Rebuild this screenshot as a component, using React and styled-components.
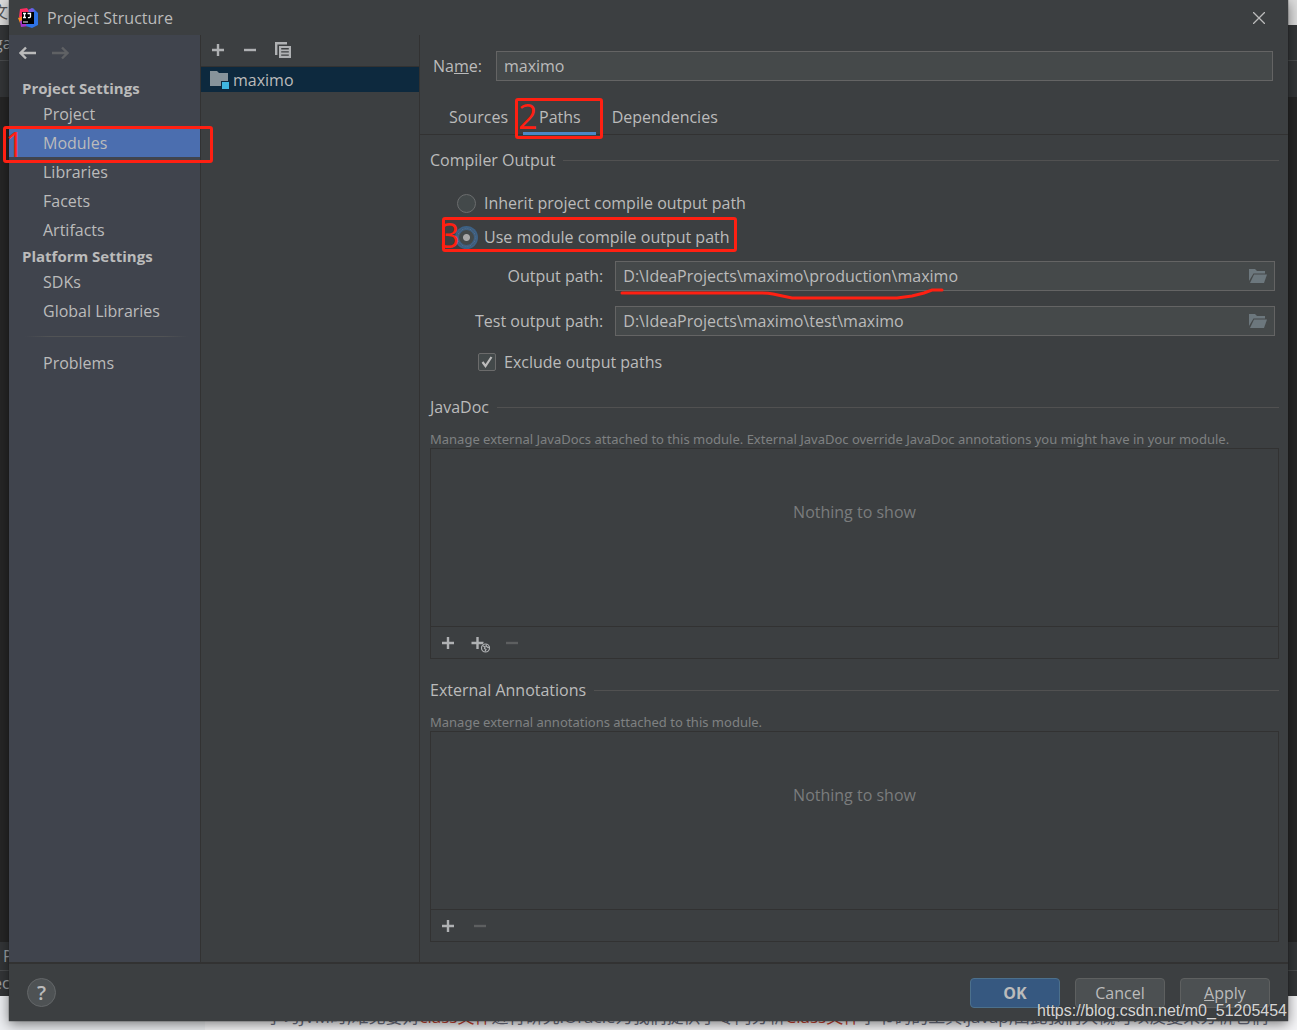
import React, { useState } from "react";
import styled, { createGlobalStyle } from "styled-components";

const GlobalStyle = createGlobalStyle`
    *{
        box-sizing: border-box;
    }
    body{
        margin: 0;
        background: #fff;
        color: #bbb;
        font-family: "Open Sans", "Noto Sans CJK SC", sans-serif;
        font-size: 16px;
        line-height: 24px;
    }
    button, input{
        font: inherit;
        color: inherit;
    }
    button{
        background: none;
        border: none;
        padding: 0;
    }
    h1, h2, p{
        margin: 0;
        font-size: 16px;
        font-weight: 400;
    }
`;

const Desktop = styled.div`
    display: grid;
    grid-template-columns: minmax(0, 1fr);
    min-height: 100vh;
    position: relative;
    overflow: hidden;
`;

const Backdrop = styled.div`
    grid-area: 1 / 1;
    display: flex;
    flex-direction: column;
    min-width: 0;
`;

const Strip = styled.div`
    height: ${(p) => p.$height}px;
    flex: ${(p) => (p.$grow ? "1" : "none")};
    background: ${(p) => p.$bg};
    color: ${(p) => p.$color || "#a0a4a8"};
    border-bottom: 1px solid ${(p) => p.$line || "transparent"};
    line-height: ${(p) => p.$height}px;
    text-indent: ${(p) => p.$indent || 0}px;
    overflow: hidden;
    white-space: nowrap;
`;

const Article = styled.div`
    display: flex;
    flex: none;
    height: 34px;
    background: linear-gradient(to right, #eceef1 205px, #f5f5f7 205px);
`;

const ArticleText = styled.p`
    padding: 9px 0 0 266px;
    height: 34px;
    overflow: hidden;
    white-space: nowrap;
    color: #6c6f80;
    line-height: 24px;
    && {
        font-size: 17px;
    }
    em{
        font-style: normal;
        color: #c7402f;
    }
`;

const Dialog = styled.main`
    grid-area: 1 / 1;
    display: flex;
    flex-direction: column;
    min-width: 0;
    margin: 0 9px 9px;
    background: #3c3f41;
    box-shadow: 0 3px 12px rgba(0, 0, 0, 0.5), 0 0 1px #222;
    z-index: 1;
`;

const TitleBar = styled.header`
    display: flex;
    align-items: center;
    gap: 9px;
    height: 35px;
    padding: 0 21px 0 9px;
    h1{
        flex: 1;
    }
`;

const Body = styled.div`
    display: flex;
    flex: 1;
`;

const Sidebar = styled.nav`
    flex: 0 0 192px;
    padding-top: 6px;
    background: #40444d;
    border-right: 1px solid #323232;
`;

const History = styled.div`
    display: flex;
    gap: 14px;
    height: 35px;
    padding: 3px 10px 0;
`;

const IconButton = styled.button`
    display: flex;
    align-items: center;
    justify-content: center;
    flex: none;
    width: ${(p) => p.$size || 16}px;
    height: ${(p) => p.$size || 16}px;
`;

const NavHeading = styled.h2`
    && {
        font-size: 15px;
        font-weight: 700;
    }
    height: 24px;
    padding-left: 13px;
`;

const NavList = styled.div`
    display: flex;
    flex-direction: column;
    gap: 1px;
`;

const NavItem = styled.a`
    position: relative;
    height: 28px;
    padding-left: 34px;
    line-height: 28px;
    color: inherit;
    text-decoration: none;
    background: ${(p) => (p.$active ? "#4b6eaf" : "none")};
`;

const NavDivider = styled.hr`
    height: 1px;
    margin: 11px 12px 12px 16px;
    border: none;
    background: linear-gradient(to right, transparent, #515355 15%, #515355 85%, transparent);
`;

const ModuleList = styled.section`
    flex: 0 0 219px;
    border-right: 1px solid #323232;
`;

const ModuleToolbar = styled.div`
    display: flex;
    align-items: center;
    gap: 16px;
    height: 32px;
    padding: 0 9px 2px;
    border-bottom: 1px solid #323232;
`;

const ModuleRow = styled.button`
    display: flex;
    align-items: center;
    gap: 3px;
    width: 100%;
    height: 25px;
    padding-left: 9px;
    background: #0d293e;
`;

const Editor = styled.section`
    flex: 1;
    min-width: 0;
    padding-top: 16px;
`;

const NameRow = styled.div`
    display: flex;
    align-items: center;
    gap: 14px;
    padding: 0 15px 0 13px;
`;

const Field = styled.div`
    position: relative;
    display: flex;
    flex: 1;
    align-items: center;
    height: 30px;
    padding-right: 7px;
    background: #45494a;
    border: 1px solid #646464;
    input{
        flex: 1;
        min-width: 0;
        height: 28px;
        padding: 0 7px;
        background: none;
        border: none;
        outline: none;
    }
`;

const Tabs = styled.div`
    display: flex;
    height: 54px;
    padding: 20px 13px 0;
    border-bottom: 1px solid #323232;
`;

const Tab = styled.button`
    position: relative;
    height: 34px;
    padding: 1px 15px 0 16px;
    border-bottom: 3px solid ${(p) => (p.$active ? "#4a88c7" : "transparent")};
`;

const Content = styled.div`
    padding: 13px 9px 0 10px;
`;

const SectionTitle = styled.h2`
    display: flex;
    align-items: center;
    gap: 8px;
    height: 24px;
    &::after{
        content: "";
        flex: 1;
        height: 1px;
        background: #515151;
    }
`;

const Options = styled.div`
    display: flex;
    flex-direction: column;
    align-items: flex-start;
    gap: 10px;
    padding: 19px 0 12px 27px;
`;

const Choice = styled.label`
    position: relative;
    display: flex;
    align-items: center;
    gap: 8px;
`;

const Radio = styled.input`
    appearance: none;
    width: 19px;
    height: 19px;
    margin: 0;
    border: 1px solid #6b6d6e;
    border-radius: 50%;
    background: #43494a;
    &:checked{
        border-color: #4b6f96;
        background: radial-gradient(circle, #a8a8a8 3px, #43494a 4px);
        box-shadow: 0 0 0 2px #3d6185, inset 0 0 0 1px #3d6185;
    }
`;

const PathGrid = styled.div`
    display: grid;
    grid-template-columns: auto 1fr;
    align-items: center;
    gap: 15px 12px;
    padding: 0 4px 0 45px;
    label{
        text-align: right;
    }
`;

const ExcludeRow = styled.div`
    display: flex;
    padding: 14px 0 21px 48px;
`;

const Tick = styled.input`
    appearance: none;
    width: 18px;
    height: 18px;
    margin: 0;
    border: 1px solid #6b6b6b;
    border-radius: 2px;
    background: #43494a;
    &:checked{
        background-image: url("data:image/svg+xml,%3Csvg xmlns='http://www.w3.org/2000/svg' viewBox='0 0 16 16'%3E%3Cpath d='M3.5 8l3 4 6-9' fill='none' stroke='%23bbb' stroke-width='2.2'/%3E%3C/svg%3E");
    }
`;

const Hint = styled.p`
    height: 18px;
    margin-top: 11px;
    color: #7f8182;
    && {
        font-family: "Noto Sans", sans-serif;
        font-size: 13px;
    }
    line-height: 18px;
    white-space: nowrap;
`;

const ListBox = styled.div`
    margin-bottom: 19px;
    border: 1px solid #323232;
`;

const EmptyList = styled.div`
    display: flex;
    justify-content: center;
    height: 177px;
    padding-top: 51px;
    color: #7a7c7d;
`;

const ListToolbar = styled.div`
    display: flex;
    align-items: center;
    gap: 16px;
    height: 32px;
    padding: 0 9px;
    border-top: 1px solid #323232;
`;

const Footer = styled.footer`
    display: flex;
    align-items: center;
    gap: 15px;
    height: 59px;
    padding: 0 18px;
    border-top: 2px solid #323232;
`;

const HelpButton = styled.button`
    width: 29px;
    height: 29px;
    margin-right: auto;
    border: 1px solid #646769;
    border-radius: 50%;
    background: #4e5254;
    font-size: 20px;
    font-weight: 600;
    line-height: 27px;
`;

const PushButton = styled.button`
    width: 90px;
    height: 30px;
    border: 1px solid ${(p) => (p.$primary ? "#4c708c" : "#5e6060")};
    border-radius: 4px;
    background: ${(p) => (p.$primary ? "#365880" : "#4c5052")};
    font-weight: ${(p) => (p.$primary ? 700 : 400)};
`;

// red marker frames lie over the part they point at
const Marker = styled.span`
    position: absolute;
    inset: ${(p) => p.$inset};
    border: 3px solid #ff2012;
    border-radius: 3px;
    pointer-events: none;
    z-index: 2;
`;

const MarkerNumber = styled.span`
    position: absolute;
    left: ${(p) => p.$left}px;
    top: -2px;
    color: #ff2012;
    font-size: 34px;
    line-height: 34px;
`;

const Scribble = styled.svg`
    position: absolute;
    left: 4px;
    top: 24px;
    pointer-events: none;
    z-index: 2;
`;

const Watermark = styled.div`
    position: absolute;
    right: 10px;
    bottom: 8px;
    z-index: 3;
    color: rgba(235, 235, 235, 0.9);
    font-family: "Liberation Sans", Arial, sans-serif;
    line-height: 22px;
    text-shadow: 0 0 1px #333;
`;

const Logo = () => (
    <svg width="20" height="20" viewBox="0 0 20 20" aria-hidden="true">
        <path d="M2 1l7-1 4 6-6 6-6-3z" fill="#fe2d61" />
        <path d="M0 10l5-2 2 5-5 2z" fill="#fc8a25" />
        <path d="M2 13l6-2 3 7-8 1z" fill="#a436c8" />
        <path d="M11 2l4-2 5 5v12l-6 3-6-2z" fill="#2f74e8" />
        <path d="M10 2l4-2 3 3-5 2z" fill="#7a5be0" />
        <rect x="4" y="4" width="12" height="12" fill="#000" />
        <path d="M5 5.500h3M6.500 5.500v4M5 9.500h3M9.500 5.500h3v3q0 1.200-2.600 1.200" fill="none" stroke="#fff" strokeWidth="1.300" />
        <path d="M5 14h5" stroke="#ccc" strokeWidth="1.200" />
    </svg>
);

const Arrow = ({ back }) => (
    <svg width="18" height="14" viewBox="0 0 18 14" fill="none" stroke={back ? "#bbb" : "#5f6164"} strokeWidth="2.400">
        <path d={back ? "M17 7H2M7 1.500L1.500 7 7 12.500" : "M1 7h15M11 1.500L16.500 7 11 12.500"} />
    </svg>
);

const Plus = ({ web }) => (
    <svg width="16" height="16" viewBox="0 0 16 16" overflow="visible" fill="none" stroke="#afb1b3">
        <path d={web ? "M5.500 2v12M-.5 8h12" : "M8 2v12M2 8h12"} strokeWidth="2.400" />
        {web && (
            <g>
                <circle cx="13.500" cy="13" r="5" fill="#3c3f41" stroke="none" />
                <circle cx="13.500" cy="13" r="4" strokeWidth="1.200" />
                <path d="M10.500 10.500l2.500 1.500-.5 1.500 1.500 1-1 2M14.500 9.500l-.5 1.500 2 1.500 1.500-.5" strokeWidth="1.200" />
            </g>
        )}
    </svg>
);

const Minus = ({ off }) => (
    <svg width="16" height="16" viewBox="0 0 16 16">
        <path d="M2 8h12" stroke={off ? "#5d5f60" : "#afb1b3"} strokeWidth="2.400" />
    </svg>
);

const Copy = () => (
    <svg width="16" height="16" viewBox="0 0 16 16" overflow="visible">
        <path d="M1 0h12v2.400H3.400V13H1z" fill="#afb1b3" />
        <path fillRule="evenodd" d="M5 4h12v12H5zM7.200 6v1.400h7.600V6zM7.200 9.200v1.400h7.600V9.200zM7.200 12.400v1.400h7.600v-1.400z" fill="#afb1b3" />
    </svg>
);

const ModuleIcon = () => (
    <svg width="20" height="18" viewBox="0 0 20 18">
        <path d="M0 0h7l2 2h9v8h-7v5H0z" fill="#87939a" />
        <rect x="12" y="11" width="7" height="7" fill="#40b6e0" />
    </svg>
);

const OpenFolder = () => (
    <svg width="18" height="14" viewBox="0 0 18 14" fill="#6c777d">
        <path d="M0 12V0h6l2 2h8v2.500H4.500z" />
        <path d="M5 5.500h13L15 14H1z" />
    </svg>
);

const settings = [
    { title: "Project Settings", items: ["Project", "Modules", "Libraries", "Facets", "Artifacts"] },
    { title: "Platform Settings", items: ["SDKs", "Global Libraries"] },
];

const PathField = ({ id, value, underlined }) => (
    <Field>
        <input id={id} defaultValue={value} />
        <IconButton $size={18} aria-label="Browse"><OpenFolder /></IconButton>
        {underlined && (
            <Scribble width="326" height="14" fill="none" stroke="#ff2012" strokeWidth="3" strokeLinecap="round">
                <path d="M2 7h138q8 0 13 1l19 4h105l15-2 12-3 8-3h10" />
            </Scribble>
        )}
    </Field>
);

const EmptyTable = ({ web }) => (
    <ListBox>
        <EmptyList>Nothing to show</EmptyList>
        <ListToolbar>
            <IconButton aria-label="Add"><Plus /></IconButton>
            {web && <IconButton aria-label="Specify URL"><Plus web /></IconButton>}
            <IconButton aria-label="Remove" disabled><Minus off /></IconButton>
        </ListToolbar>
    </ListBox>
);

const App = () => {
    const [output, setOutput] = useState("module");

    return (
        <Desktop>
            <GlobalStyle />
            <Backdrop aria-hidden="true">
                <Strip $height={25} $bg="#dcdcdc" $indent={-8} $color="#555">文</Strip>
                <Strip $height={36} $bg="#343638" $line="#4a4c4e" $indent={-6}>ga</Strip>
                <Strip $height={36} $bg="#343638" />
                <Strip $height={36} $grow $bg="#262626" />
                <Strip $height={29} $bg="#343638" $line="#4a4c4e" $indent={3}>P</Strip>
                <Strip $height={25} $bg="#343638" $indent={-7}>ec</Strip>
                <Article>
                    <ArticleText>
                        学习JVM时,难免要对<em>class文件</em>进行研究.Oracle为我们提供了专门分析<em>Class文件</em>字节码的工具:javap,由此我们大概可以反复来分析它们
                    </ArticleText>
                </Article>
            </Backdrop>
            <Dialog>
                <TitleBar>
                    <Logo />
                    <h1>Project Structure</h1>
                    <IconButton aria-label="Close">
                        <svg width="12" height="12" viewBox="0 0 12 12" stroke="#bbb" strokeWidth="1.300">
                            <path d="M0 0l12 12M12 0L0 12" />
                        </svg>
                    </IconButton>
                </TitleBar>
                <Body>
                    <Sidebar>
                        <History>
                            <IconButton $size={18} aria-label="Back"><Arrow back /></IconButton>
                            <IconButton $size={18} aria-label="Forward" disabled><Arrow /></IconButton>
                        </History>
                        {settings.map((group) => (
                            <div key={group.title}>
                                <NavHeading>{group.title}</NavHeading>
                                <NavList>
                                    {group.items.map((item) => (
                                        <NavItem key={item} href="#" $active={item === "Modules"}>
                                            {item}
                                            {item === "Modules" && (
                                                <Marker $inset="-3px -13px -6px -6px">
                                                    <MarkerNumber $left={-1}>1</MarkerNumber>
                                                </Marker>
                                            )}
                                        </NavItem>
                                    ))}
                                </NavList>
                            </div>
                        ))}
                        <NavDivider />
                        <NavList>
                            <NavItem href="#">Problems</NavItem>
                        </NavList>
                    </Sidebar>
                    <ModuleList>
                        <ModuleToolbar>
                            <IconButton aria-label="Add"><Plus /></IconButton>
                            <IconButton aria-label="Remove"><Minus /></IconButton>
                            <IconButton aria-label="Copy"><Copy /></IconButton>
                        </ModuleToolbar>
                        <ModuleRow><ModuleIcon />maximo</ModuleRow>
                    </ModuleList>
                    <Editor>
                        <NameRow>
                            <label htmlFor="name">Na<u>m</u>e:</label>
                            <Field><input id="name" defaultValue="maximo" /></Field>
                        </NameRow>
                        <Tabs role="tablist">
                            <Tab role="tab">Sources</Tab>
                            <Tab role="tab" aria-selected="true" $active>
                                Paths
                                <Marker $inset="-3px -7px -7px -8px">
                                    <MarkerNumber $left={0}>2</MarkerNumber>
                                </Marker>
                            </Tab>
                            <Tab role="tab">Dependencies</Tab>
                        </Tabs>
                        <Content>
                            <SectionTitle>Compiler Output</SectionTitle>
                            <Options>
                                <Choice>
                                    <Radio type="radio" name="output" checked={output === "project"} onChange={() => setOutput("project")} />
                                    Inherit project compile output path
                                </Choice>
                                <Choice>
                                    <Radio type="radio" name="output" checked={output === "module"} onChange={() => setOutput("module")} />
                                    Use module compile output path
                                    <Marker $inset="-8px -7px -3px -15px">
                                        <MarkerNumber $left={-5}>3</MarkerNumber>
                                    </Marker>
                                </Choice>
                            </Options>
                            <PathGrid>
                                <label htmlFor="output-path">Output path:</label>
                                <PathField id="output-path" value="D:\IdeaProjects\maximo\production\maximo" underlined />
                                <label htmlFor="test-path">Test output path:</label>
                                <PathField id="test-path" value="D:\IdeaProjects\maximo\test\maximo" />
                            </PathGrid>
                            <ExcludeRow>
                                <Choice>
                                    <Tick type="checkbox" defaultChecked />
                                    Exclude output paths
                                </Choice>
                            </ExcludeRow>
                            <SectionTitle>JavaDoc</SectionTitle>
                            <Hint>Manage external JavaDocs attached to this module. External JavaDoc override JavaDoc annotations you might have in your module.</Hint>
                            <EmptyTable web />
                            <SectionTitle>External Annotations</SectionTitle>
                            <Hint>Manage external annotations attached to this module.</Hint>
                            <EmptyTable />
                        </Content>
                    </Editor>
                </Body>
                <Footer>
                    <HelpButton aria-label="Help">?</HelpButton>
                    <PushButton $primary>OK</PushButton>
                    <PushButton>Cancel</PushButton>
                    <PushButton><u>A</u>pply</PushButton>
                </Footer>
            </Dialog>
            <Watermark>https://blog.csdn.net/m0_51205454</Watermark>
        </Desktop>
    );
};

export default App;
